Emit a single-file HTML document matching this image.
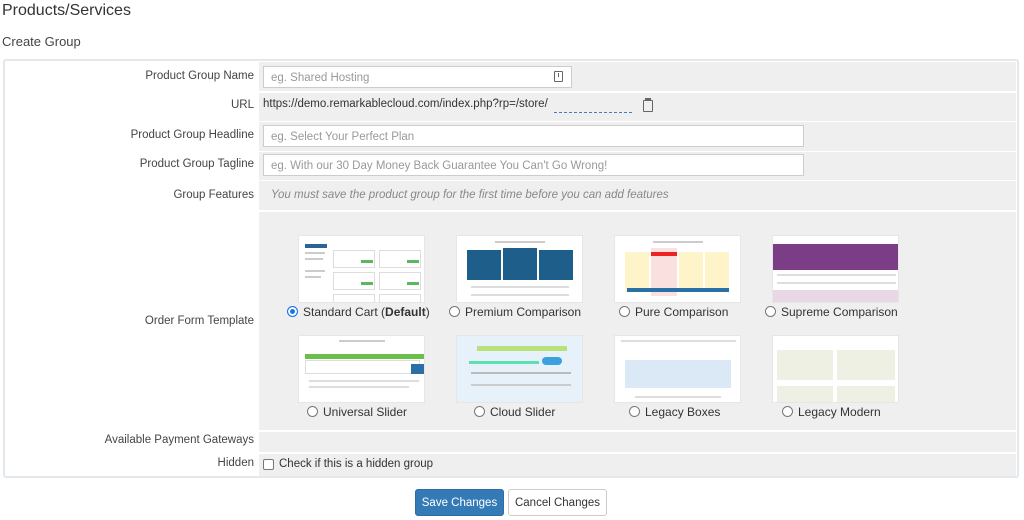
<!DOCTYPE html>
<html><head><meta charset="utf-8"><style>
*{box-sizing:border-box;margin:0;padding:0}
body{width:1024px;height:520px;background:#fff;font-family:"Liberation Sans",sans-serif;font-size:12px;color:#333;position:relative;overflow:hidden}
.a{position:absolute}
.lab{position:absolute;left:4px;width:250px;text-align:right;color:#444;font-size:11.5px}
.f{position:absolute;left:259px;width:757px;background:#efefef}
.inp{position:absolute;left:263px;height:22px;background:#fff;border:1px solid #ccc;color:#999;font-size:11.5px;padding:4px 7px}
.th{position:absolute;width:127px;height:68px;background:#fff;border:1px solid #e6e6e6;overflow:hidden}
.ln{position:absolute;height:2px;background:#ccc}
.rl{position:absolute;font-size:12px;color:#333;white-space:nowrap}
.rd{display:inline-block;width:11px;height:11px;border:1px solid #777;border-radius:50%;vertical-align:-1px;margin-right:5px;background:#fff}
.rd.on{border-color:#1a73e8;box-shadow:inset 0 0 0 2px #fff;background:#1a73e8}
</style></head><body>
<div class="a" style="left:2px;top:2px;font-size:16px;color:#333">Products/Services</div>
<div class="a" style="left:2px;top:34px;font-size:13px;color:#444">Create Group</div>
<div class="a" style="left:3px;top:59px;width:1016px;height:419px;border:2px solid #e3e8ec;border-radius:3px"></div>

<div class="f" style="top:62px;height:29px"></div>
<div class="f" style="top:93px;height:28px"></div>
<div class="f" style="top:122px;height:29px"></div>
<div class="f" style="top:152px;height:28px"></div>
<div class="f" style="top:181px;height:29px"></div>
<div class="f" style="top:212px;height:218px"></div>
<div class="f" style="top:432px;height:20px"></div>
<div class="f" style="top:454px;height:22px"></div>

<div class="lab" style="top:70px">Product Group Name</div>
<div class="lab" style="top:99px">URL</div>
<div class="lab" style="top:129px">Product Group Headline</div>
<div class="lab" style="top:158px">Product Group Tagline</div>
<div class="lab" style="top:189px">Group Features</div>
<div class="lab" style="top:315px">Order Form Template</div>
<div class="lab" style="top:434px">Available Payment Gateways</div>
<div class="lab" style="top:457px">Hidden</div>

<div class="inp" style="top:66px;width:309px;padding-top:5px">eg. Shared Hosting</div>
<div class="a" style="left:554px;top:71px;width:9px;height:11px;border:1px solid #666;border-radius:1px"></div>
<div class="a" style="left:558px;top:73px;width:1px;height:4px;background:#666"></div>
<div class="a" style="left:263px;top:98px;font-size:11.5px;color:#333">https://demo.remarkablecloud.com/index.php?rp=/store/</div>
<div class="a" style="left:554px;top:112px;width:78px;border-top:1px dashed #4a7bb7"></div>
<div class="a" style="left:643px;top:100px;width:10px;height:12px;border:1.5px solid #666;border-radius:1px"></div>
<div class="a" style="left:645px;top:98px;width:6px;height:3px;background:#666"></div>
<div class="inp" style="top:125px;width:541px;padding-top:5px">eg. Select Your Perfect Plan</div>
<div class="inp" style="top:154px;width:541px;padding-top:5px">eg. With our 30 Day Money Back Guarantee You Can't Go Wrong!</div>
<div class="a" style="left:271px;top:189px;font-style:italic;color:#888;font-size:11.5px">You must save the product group for the first time before you can add features</div>

<div class="th" style="left:298px;top:235px"><div class="a" style="left:6px;top:8px;width:22px;height:4px;background:#2a6496"></div><div class="ln" style="left:6px;top:16px;width:20px"></div><div class="ln" style="left:6px;top:22px;width:18px"></div><div class="ln" style="left:6px;top:34px;width:20px"></div><div class="ln" style="left:6px;top:40px;width:16px"></div><div class="a" style="left:34px;top:14px;width:42px;height:18px;border:1px solid #ddd"></div><div class="a" style="left:80px;top:14px;width:42px;height:18px;border:1px solid #ddd"></div><div class="a" style="left:34px;top:36px;width:42px;height:18px;border:1px solid #ddd"></div><div class="a" style="left:80px;top:36px;width:42px;height:18px;border:1px solid #ddd"></div><div class="a" style="left:34px;top:58px;width:42px;height:10px;border:1px solid #ddd"></div><div class="a" style="left:80px;top:58px;width:42px;height:10px;border:1px solid #ddd"></div><div class="a" style="left:62px;top:24px;width:12px;height:3px;background:#5cb85c"></div><div class="a" style="left:108px;top:24px;width:12px;height:3px;background:#5cb85c"></div><div class="a" style="left:62px;top:46px;width:12px;height:3px;background:#5cb85c"></div><div class="a" style="left:108px;top:46px;width:12px;height:3px;background:#5cb85c"></div></div>
<div class="th" style="left:456px;top:235px"><div class="ln" style="left:38px;top:5px;width:50px"></div><div class="a" style="left:10px;top:14px;width:34px;height:30px;background:#1d5f8a"></div><div class="a" style="left:46px;top:12px;width:34px;height:32px;background:#1d5f8a"></div><div class="a" style="left:82px;top:14px;width:34px;height:30px;background:#1d5f8a"></div><div class="ln" style="left:14px;top:50px;width:98px;background:#ddd"></div><div class="ln" style="left:14px;top:58px;width:98px;background:#ddd"></div></div>
<div class="th" style="left:614px;top:235px"><div class="ln" style="left:38px;top:5px;width:50px"></div><div class="a" style="left:10px;top:16px;width:24px;height:40px;background:#fdf5c9"></div><div class="a" style="left:36px;top:12px;width:26px;height:48px;background:#fbe0e0"></div><div class="a" style="left:36px;top:16px;width:26px;height:4px;background:#e22"></div><div class="a" style="left:64px;top:16px;width:24px;height:40px;background:#fdf5c9"></div><div class="a" style="left:90px;top:16px;width:24px;height:40px;background:#fdf5c9"></div><div class="a" style="left:12px;top:52px;width:102px;height:4px;background:#2a6fa5"></div></div>
<div class="th" style="left:772px;top:235px"><div class="a" style="left:0;top:8px;width:127px;height:26px;background:#7b3d85"></div><div class="ln" style="left:4px;top:38px;width:119px;background:#ddd"></div><div class="ln" style="left:4px;top:46px;width:119px;background:#ddd"></div><div class="a" style="left:0;top:54px;width:127px;height:14px;background:#e8d8e6"></div></div>
<div class="th" style="left:298px;top:335px"><div class="ln" style="left:40px;top:4px;width:46px"></div><div class="a" style="left:6px;top:18px;width:121px;height:5px;background:#6bc04b"></div><div class="a" style="left:6px;top:24px;width:115px;height:14px;border:1px solid #ddd"></div><div class="a" style="left:112px;top:28px;width:15px;height:10px;background:#2a6fa5"></div><div class="ln" style="left:10px;top:44px;width:110px;background:#ddd"></div><div class="ln" style="left:10px;top:50px;width:100px;background:#ddd"></div></div>
<div class="th" style="left:456px;top:335px;background:#e6f1fa"><div class="a" style="left:20px;top:10px;width:90px;height:5px;background:#b9e07a"></div><div class="a" style="left:12px;top:25px;width:70px;height:3px;background:#5ce0b0"></div><div class="a" style="left:85px;top:21px;width:20px;height:8px;background:#3aa0e0;border-radius:4px"></div><div class="ln" style="left:14px;top:36px;width:100px;background:#bbb"></div><div class="ln" style="left:14px;top:48px;width:100px;background:#ccc"></div></div>
<div class="th" style="left:614px;top:335px"><div class="ln" style="left:6px;top:4px;width:115px;background:#ddd"></div><div class="a" style="left:10px;top:24px;width:106px;height:28px;background:#dbe9f7"></div><div class="ln" style="left:20px;top:60px;width:86px;background:#ddd"></div></div>
<div class="th" style="left:772px;top:335px"><div class="a" style="left:4px;top:14px;width:56px;height:30px;background:#eef0e4"></div><div class="a" style="left:64px;top:14px;width:58px;height:30px;background:#eef0e4"></div><div class="a" style="left:4px;top:50px;width:56px;height:18px;background:#eef0e4"></div><div class="a" style="left:64px;top:50px;width:58px;height:18px;background:#eef0e4"></div></div>

<div class="rl" style="left:287px;top:305px"><span class="rd on"></span>Standard Cart (<b>Default</b>)</div>
<div class="rl" style="left:449px;top:305px"><span class="rd"></span>Premium Comparison</div>
<div class="rl" style="left:619px;top:305px"><span class="rd"></span>Pure Comparison</div>
<div class="rl" style="left:765px;top:305px"><span class="rd"></span>Supreme Comparison</div>
<div class="rl" style="left:307px;top:405px"><span class="rd"></span>Universal Slider</div>
<div class="rl" style="left:474px;top:405px"><span class="rd"></span>Cloud Slider</div>
<div class="rl" style="left:629px;top:405px"><span class="rd"></span>Legacy Boxes</div>
<div class="rl" style="left:782px;top:405px"><span class="rd"></span>Legacy Modern</div>

<div class="a" style="left:263px;top:459px;width:11px;height:11px;border:1px solid #777;border-radius:2px;background:#fff"></div>
<div class="a" style="left:279px;top:458px;font-size:11.5px;color:#333">Check if this is a hidden group</div>

<div class="a" style="left:415px;top:489px;width:89px;height:27px;background:#337ab7;border:1px solid #2e6da4;border-radius:3px;color:#fff;font-size:11.5px;text-align:center;line-height:26px">Save Changes</div>
<div class="a" style="left:508px;top:489px;width:99px;height:27px;background:#fff;border:1px solid #ccc;border-radius:3px;color:#333;font-size:11.5px;text-align:center;line-height:26px">Cancel Changes</div>
</body></html>
